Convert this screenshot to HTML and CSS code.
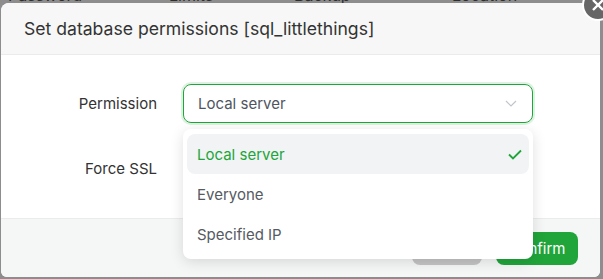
FILE: index.html
```html
<!DOCTYPE html>
<html lang="en">
<head>
    <meta charset="UTF-8">
    <meta name="viewport" content="width=device-width, initial-scale=1.0">
    <title>Database permissions</title>
    <link rel="stylesheet" href="styles.css">
</head>
<body>
    <!-- page underneath the modal overlay -->
    <div class="backdrop-row">
        <span class="col-pass">Password</span>
        <span class="col-limits">Limits</span>
        <span class="col-backup">Backup</span>
        <span class="col-location">Location</span>
    </div>

    <div class="dialog">
        <div class="dialog-head">Set database permissions [sql_littlethings]</div>

        <div class="dialog-body">
            <div class="form-row">
                <label>Permission</label>
                <div class="select is-open">
                    <span class="select-value">Local server</span>
                    <svg class="select-arrow" width="12" height="7" viewBox="0 0 12 7">
                        <path d="M1 1l5 5 5-5" fill="none" stroke="#c0c4cc" stroke-width="1.2"/>
                    </svg>
                    <ul class="dropdown">
                        <li class="active">
                            Local server
                            <svg width="16" height="16" viewBox="0 0 16 16">
                                <path d="M2 8.5l4 4 8-8" fill="none" stroke="#20a53a" stroke-width="1.8"/>
                            </svg>
                        </li>
                        <li>Everyone</li>
                        <li>Specified IP</li>
                    </ul>
                </div>
            </div>
            <div class="form-row">
                <label>Force SSL</label>
                <div class="switch"></div>
            </div>
        </div>

        <div class="dialog-foot">
            <button class="btn btn-cancel">Cancel</button>
            <button class="btn btn-confirm">Confirm</button>
        </div>

        <button class="dialog-close">
            <svg width="14" height="14" viewBox="0 0 14 14">
                <path d="M2 2l10 10M12 2L2 12" stroke="#fff" stroke-width="2.4"/>
            </svg>
        </button>
    </div>
</body>
</html>
```

FILE: styles.css
```css
html, body {
    overflow: hidden;
}
body {
    font-family: 'Inter', 'Liberation Sans', sans-serif;
    margin: 0;
    padding: 0;
    background-color: #8d8d8d;
    color: #333;
    height: 279px;
    position: relative;
}
.backdrop-row {
    display: flex;
    margin-top: -13px;
    height: 16px;
    font-size: 16px;
    line-height: 16px;
    color: #2e2e2e;
}
.backdrop-row span {
    flex: none;
}
.col-pass { margin-left: 8px; width: 161px; }
.col-limits { width: 125px; }
.col-backup { width: 158px; }
.dialog {
    position: absolute;
    left: 1px;
    top: 3px;
    width: 599px;
    height: 274px;
    background: white;
    border-radius: 8px 8px 6px 6px;
    display: flex;
    flex-direction: column;
}
.dialog-head {
    height: 51px;
    line-height: 51px;
    padding: 0 22px 0 23px;
    font-size: 17.6px;
    color: #333;
    background-color: #f7f7f7;
    border-bottom: 1px solid #ebebeb;
    border-radius: 8px 8px 0 0;
}
.dialog-body {
    height: 134px;
    padding-top: 29px;
}
.form-row {
    display: grid;
    grid-template-columns: 156px 350px;
    column-gap: 26px;
    align-items: center;
    height: 39px;
    margin-bottom: 26px;
}
.form-row label {
    text-align: right;
    font-size: 15px;
    color: #333;
}
.select {
    position: relative;
    box-sizing: border-box;
    height: 39px;
    padding: 0 14px 0 14px;
    display: flex;
    align-items: center;
    justify-content: space-between;
    border: 1px solid #dcdfe6;
    border-radius: 8px;
    font-size: 15px;
    color: #4f5560;
}
.select.is-open {
    border-color: #20a53a;
    box-shadow: 0 0 0 2px rgba(32, 165, 58, 0.15);
}
.select-arrow {
    margin-right: 1px;
}
.dropdown {
    position: absolute;
    left: -1px;
    right: -1px;
    top: 44px;
    margin: 0;
    padding: 5px 4px;
    list-style: none;
    background: white;
    border-radius: 8px;
    box-shadow: 0 3px 14px rgba(0, 0, 0, 0.13);
    z-index: 5;
}
.dropdown li {
    height: 40px;
    padding: 0 6px 0 10px;
    display: flex;
    align-items: center;
    justify-content: space-between;
    border-radius: 8px;
    font-size: 15px;
    color: #555a63;
}
.dropdown li.active {
    background-color: #f2f3f5;
    color: #20a53a;
}
.switch {
    width: 40px;
    height: 20px;
    border-radius: 10px;
    background: #dcdfe6;
}
.dialog-foot {
    flex: 1;
    display: flex;
    justify-content: flex-end;
    align-items: flex-start;
    gap: 14px;
    padding: 13px 22px 0;
    background-color: #f5f6f6;
    border-top: 1px solid #ebebeb;
    border-radius: 0 0 6px 6px;
}
.btn {
    height: 33px;
    padding: 0;
    font-family: inherit;
    font-size: 15px;
    color: white;
    border: none;
    border-radius: 8px;
    cursor: pointer;
}
.btn-cancel {
    width: 70px;
    background-color: #c4c4c4;
}
.btn-confirm {
    width: 82px;
    background-color: #20a53a;
}
.dialog-close {
    position: absolute;
    right: -14px;
    top: -14px;
    width: 32px;
    height: 32px;
    box-sizing: border-box;
    padding: 0;
    display: flex;
    align-items: center;
    justify-content: center;
    border: 2px solid white;
    border-radius: 50%;
    background-color: #666;
    cursor: pointer;
}
```
